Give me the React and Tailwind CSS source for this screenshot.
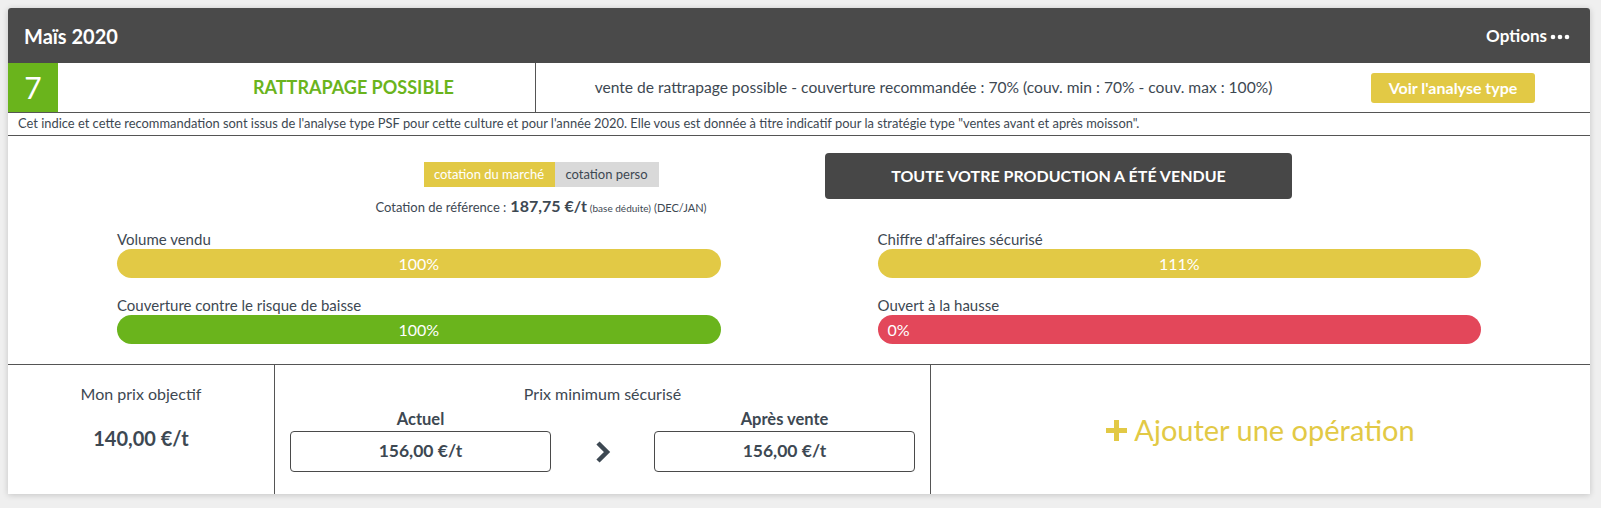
const ink = 'text-[#3d4852]'

const Bar = ({ label, value, color, align = 'center' }) => (
  <div>
    <div className={`text-[15px] leading-[20px] ${ink}`}>{label}</div>
    <div
      className={`h-[29px] rounded-full flex items-center text-white text-[16px] ${color} ${align === 'left' ? 'justify-start pl-[10px]' : 'justify-center'}`}
    >
      {value}
    </div>
  </div>
)

const Dots = () => (
  <svg width="20" height="6" viewBox="0 0 20 6" className="ml-[3px] mt-[2px]">
    <circle cx="3" cy="3" r="2.3" fill="white" />
    <circle cx="10" cy="3" r="2.3" fill="white" />
    <circle cx="17" cy="3" r="2.3" fill="white" />
  </svg>
)

const PriceBox = ({ label, value }) => (
  <div className="w-[261px] flex flex-col items-center">
    <div className={`text-[16.5px] font-bold leading-[20px] ${ink}`}>{label}</div>
    <div className={`mt-[2px] w-full h-[41px] border border-[#4a4a4a] rounded-[4px] flex items-center justify-center text-[17.5px] font-bold ${ink}`}>
      {value}
    </div>
  </div>
)

export default function App() {
  return (
    <div className="min-h-[508px] bg-[#efefef] p-[8px]" style={{ fontFamily: 'Lato, "Open Sans", sans-serif' }}>
      <div className="w-[1582px] bg-white shadow-[0_1px_6px_rgba(0,0,0,0.18)] rounded-t-[3px]">
        {/* header */}
        <div className="h-[55px] bg-[#4a4a4a] rounded-t-[3px] flex items-center justify-between pl-[16px] pr-[20px]">
          <div className="text-white font-bold text-[20px]">Maïs 2020</div>
          <div className="flex items-center text-white font-bold text-[17px]">
            Options
            <Dots />
          </div>
        </div>

        {/* indicator row */}
        <div className="h-[50px] flex border-b border-[#555]">
          <div className="w-[50px] bg-[#6ab41c] flex items-center justify-center text-white text-[30px]">7</div>
          <div className="w-[477px] flex items-center pl-[195px] text-[#6ab41c] font-bold text-[18px]">
            RATTRAPAGE POSSIBLE
          </div>
          <div className="flex-1 flex items-center border-l border-[#555]">
            <div className={`w-[795px] text-center text-[15.6px] ${ink}`}>
              vente de rattrapage possible - couverture recommandée : 70% (couv. min : 70% - couv. max : 100%)
            </div>
            <button className="ml-[40px] w-[164px] h-[30px] rounded-[3px] bg-[#e2c945] text-white font-bold text-[16px]">
              Voir l'analyse type
            </button>
          </div>
        </div>

        {/* disclaimer */}
        <div className={`h-[23px] flex items-center pl-[10px] border-b border-[#555] text-[12.9px] ${ink}`}>
          Cet indice et cette recommandation sont issus de l'analyse type PSF pour cette culture et pour l'année 2020. Elle vous est donnée à titre indicatif pour la stratégie type "ventes avant et après moisson".
        </div>

        {/* summary */}
        <div className="pb-[20px]">
          <div className="flex items-start">
            <div className="ml-[368px] w-[330px] flex flex-col items-center pt-[26px]">
              <div className="flex h-[25px] text-[13px]">
                <div className="w-[131px] bg-[#e2c945] text-white flex items-center justify-center">cotation du marché</div>
                <div className={`w-[104px] bg-[#d9d9d9] flex items-center justify-center ${ink}`}>cotation perso</div>
              </div>
              <div className={`mt-[7px] h-[18px] flex items-baseline whitespace-nowrap ${ink}`}>
                <span className="text-[13px]">Cotation de référence :</span>
                <span className="ml-[4px] text-[16px] font-bold">187,75 €/t</span>
                <span className="ml-[3px] text-[10px]">(base déduite)</span>
                <span className="ml-[3px] text-[11px]">(DEC/JAN)</span>
              </div>
            </div>
            <div className="ml-[119px] mt-[17px] w-[467px] h-[46px] rounded-[4px] bg-[#474747] flex items-center justify-center text-white font-bold text-[16px]">
              TOUTE VOTRE PRODUCTION A ÉTÉ VENDUE
            </div>
          </div>

          <div className="mt-[17px] px-[109px] grid grid-cols-2 gap-x-[157px] gap-y-[17px]">
            <Bar label="Volume vendu" value="100%" color="bg-[#e2c945]" />
            <Bar label="Chiffre d'affaires sécurisé" value="111%" color="bg-[#e2c945]" />
            <Bar label="Couverture contre le risque de baisse" value="100%" color="bg-[#6ab41c]" />
            <Bar label="Ouvert à la hausse" value="0%" color="bg-[#e3475a]" align="left" />
          </div>
        </div>

        {/* prices */}
        <div className="h-[130px] flex border-t border-[#555]">
          <div className="w-[266px] flex flex-col items-center pt-[19px]">
            <div className={`text-[16px] leading-[20px] ${ink}`}>Mon prix objectif</div>
            <div className={`mt-[22px] text-[20px] leading-[24px] font-bold ${ink}`}>140,00 €/t</div>
          </div>
          <div className="w-[656px] border-l border-[#555] flex flex-col items-center pt-[19px] px-[15px]">
            <div className={`text-[16px] leading-[20px] ${ink}`}>Prix minimum sécurisé</div>
            <div className="mt-[5px] w-full flex items-end">
              <PriceBox label="Actuel" value="156,00 €/t" />
              <div className="w-[103px] h-[41px] flex items-center justify-center">
                <svg width="16" height="24" viewBox="0 0 16 24">
                  <polyline points="3,3 12,12 3,21" fill="none" stroke="#3d4852" strokeWidth="4.5" strokeLinejoin="miter" />
                </svg>
              </div>
              <PriceBox label="Après vente" value="156,00 €/t" />
            </div>
          </div>
          <div className="flex-1 border-l border-[#555] flex items-center justify-center text-[#e2c945]">
            <svg width="21" height="21" viewBox="0 0 21 21" className="mr-[7px] mt-[1px]">
              <rect x="8" y="0" width="5" height="21" fill="#e2c945" />
              <rect x="0" y="8" width="21" height="5" fill="#e2c945" />
            </svg>
            <span className="text-[29px]">Ajouter une opération</span>
          </div>
        </div>
      </div>
    </div>
  )
}
